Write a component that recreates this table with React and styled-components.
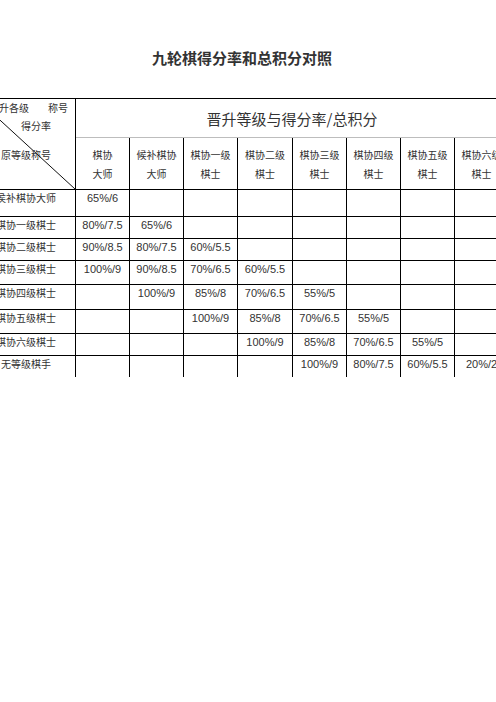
import React from "react";
import styled, { createGlobalStyle } from "styled-components";

const GlobalStyle = createGlobalStyle`
  html, body {
    margin: 0;
    padding: 0;
    background: #fff;
    overflow: hidden;
  }
  body {
    width: 496px;
    height: 702px;
    font-family: "Liberation Sans", "Noto Sans CJK SC", sans-serif;
    color: #333;
  }
`;

const ranks = [
  ["棋协", "大师"],
  ["候补棋协", "大师"],
  ["棋协一级", "棋士"],
  ["棋协二级", "棋士"],
  ["棋协三级", "棋士"],
  ["棋协四级", "棋士"],
  ["棋协五级", "棋士"],
  ["棋协六级", "棋士"],
];

const rows = [
  { name: "侯补棋协大师", height: 27, cells: ["65%/6"] },
  { name: "棋协一级棋士", height: 22, cells: ["80%/7.5", "65%/6"] },
  { name: "棋协二级棋士", height: 22, cells: ["90%/8.5", "80%/7.5", "60%/5.5"] },
  { name: "棋协三级棋士", height: 24, cells: ["100%/9", "90%/8.5", "70%/6.5", "60%/5.5"] },
  { name: "棋协四级棋士", height: 25, cells: ["", "100%/9", "85%/8", "70%/6.5", "55%/5"] },
  { name: "棋协五级棋士", height: 24, cells: ["", "", "100%/9", "85%/8", "70%/6.5", "55%/5"] },
  { name: "棋协六级棋士", height: 22, cells: ["", "", "", "100%/9", "85%/8", "70%/6.5", "55%/5"] },
  { name: "无等级棋手", height: 21, cells: ["", "", "", "", "100%/9", "80%/7.5", "60%/5.5", "20%/2"] },
];

const colWidths = [99, 54, 54, 54, 55, 54, 54, 54, 54];

function App() {
  return (
    <>
      <GlobalStyle />
      <Page>
        <Title>九轮棋得分率和总积分对照</Title>
        <Table>
          <colgroup>
            {colWidths.map((w, i) => (
              <col key={i} style={{ width: w }} />
            ))}
          </colgroup>
          <thead>
            <tr>
              <CornerCell rowSpan={2}>
                <Diagonal viewBox="0 0 100 100" preserveAspectRatio="none">
                  <line
                    x1="0"
                    y1="0"
                    x2="100"
                    y2="100"
                    stroke="#111"
                    strokeWidth="1"
                    vectorEffect="non-scaling-stroke"
                  />
                </Diagonal>
                <CornerLine $left={12} $right={7} $split>
                  <span>晋升各级</span>
                  <span>称号</span>
                </CornerLine>
                <CornerLine $left={44}>得分率</CornerLine>
                <CornerLine $left={24} $top={11}>
                  原等级称号
                </CornerLine>
              </CornerCell>
              <SpanHeader colSpan={8}>晋升等级与得分率/总积分</SpanHeader>
            </tr>
            <tr>
              {ranks.map(([a, b]) => (
                <RankHeader key={a}>
                  {a}
                  <br />
                  {b}
                </RankHeader>
              ))}
            </tr>
          </thead>
          <tbody>
            {rows.map((row, ri) => (
              <tr key={row.name} style={{ height: row.height }}>
                <NameCell $last={ri === rows.length - 1}>{row.name}</NameCell>
                {Array.from({ length: 8 }).map((_, ci) => (
                  <ValueCell key={ci} $last={ri === rows.length - 1}>
                    {row.cells[ci] || ""}
                  </ValueCell>
                ))}
              </tr>
            ))}
          </tbody>
        </Table>
      </Page>
    </>
  );
}

const Page = styled.div`
  padding-top: 48px;
  margin-left: -24px;
  width: 532px;
`;

const Title = styled.h1`
  margin: 0 0 30px;
  font-family: "Noto Sans CJK SC", sans-serif;
  font-size: 15px;
  line-height: 20px;
  font-weight: 700;
  color: #333;
  text-align: center;
  letter-spacing: 0;
`;

const Table = styled.table`
  border-collapse: collapse;
  table-layout: fixed;
  width: 532px;
  font-size: 11px;
  color: #333;

  td,
  th {
    border: 1px solid #000;
    padding: 0;
    font-weight: 400;
  }
`;

const CornerCell = styled.th`
  position: relative;
  height: 89px;
  vertical-align: top;
  text-align: left;
  font-size: 10px;
  overflow: hidden;
`;

const Diagonal = styled.svg`
  position: absolute;
  left: 0;
  top: 0;
  width: 100%;
  height: 100%;
  pointer-events: none;
`;

const CornerLine = styled.div`
  position: relative;
  display: ${(p) => (p.$split ? "flex" : "block")};
  justify-content: space-between;
  height: 18px;
  line-height: 18px;
  margin-top: ${(p) => p.$top || 0}px;
  padding-left: ${(p) => p.$left || 0}px;
  padding-right: ${(p) => p.$right || 0}px;
  white-space: nowrap;
  font-family: "Noto Sans CJK SC", sans-serif;
`;

const SpanHeader = styled.th`
  height: 38px;
  border-bottom-color: #bdbdbd !important;
  font-family: "Noto Sans CJK SC", sans-serif;
  font-size: 15px;
  color: #333;
  text-align: center;
  vertical-align: middle;
`;

const RankHeader = styled.th`
  height: 51px;
  font-family: "Noto Sans CJK SC", sans-serif;
  font-size: 10px;
  line-height: 19px;
  text-align: center;
  vertical-align: middle;
  white-space: nowrap;
  overflow: hidden;
`;

const NameCell = styled.td`
  font-family: "Noto Sans CJK SC", sans-serif;
  font-size: 10px;
  line-height: 14px;
  padding-top: 1px !important;
  text-align: center;
  vertical-align: top;
  white-space: nowrap;
  ${(p) => p.$last && "border-bottom: none !important;"}
`;

const ValueCell = styled.td`
  line-height: 14px;
  padding-top: 1px !important;
  text-align: center;
  vertical-align: top;
  white-space: nowrap;
  overflow: hidden;
  ${(p) => p.$last && "border-bottom: none !important;"}
`;

export default App;
